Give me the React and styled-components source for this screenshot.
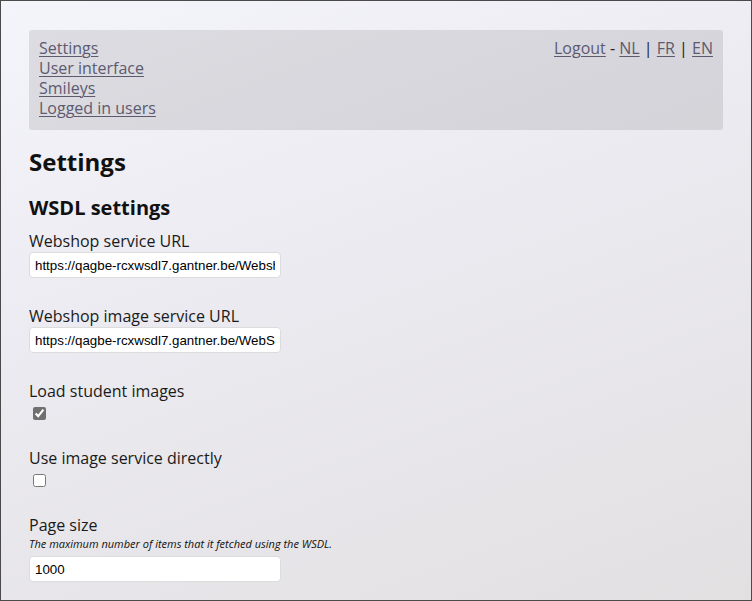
import React from "react";
import styled, { createGlobalStyle } from "styled-components";

const Global = createGlobalStyle`
  html, body { margin: 0; padding: 0; }
  body { font-family: "Open Sans", "Noto Sans", sans-serif; color: #111; }
  * { box-sizing: border-box; }
`;

const Page = styled.div`
  width: 752px;
  height: 601px;
  border: 1px solid #4a4a4a;
  background: linear-gradient(160deg, #f4f4fb 0%, #ebeaf0 45%, #e2e0e1 100%);
  padding: 29px 28px 0 28px;
  overflow: hidden;
`;

const Nav = styled.nav`
  display: flex;
  justify-content: space-between;
  align-items: flex-start;
  background: rgba(0, 0, 0, 0.095);
  border-radius: 3px;
  padding: 8px 10px 12px 10px;
  font-size: 16px;
  line-height: 20px;
`;

const NavList = styled.div`
  display: flex;
  flex-direction: column;
`;

const NavLink = styled.a`
  color: #5d5a70;
  text-decoration: underline;
  text-underline-offset: 2px;
  text-decoration-thickness: 1px;
  cursor: pointer;
`;

const Lang = styled.div`
  color: #222;
  white-space: pre;
`;

const Title = styled.h1`
  font-size: 24px;
  font-weight: 700;
  margin: 15px 0 0 0;
  line-height: 33px;
`;

const Subtitle = styled.h2`
  font-size: 20px;
  font-weight: 700;
  margin: 16px 0 9px 0;
  line-height: 27px;
`;

const Field = styled.div`
  display: flex;
  flex-direction: column;
  align-items: flex-start;
  margin-bottom: ${(p) => p.gap ?? 24}px;
`;

const Label = styled.label`
  font-size: 16px;
  line-height: 22px;
  color: #1a1a1a;
`;

const Help = styled.small`
  font-size: 11px;
  font-style: italic;
  line-height: 15px;
  color: #111;
  margin-bottom: 5px;
`;

const TextInput = styled.input`
  width: 252px;
  height: 26px;
  border: 1px solid #dcdcdc;
  border-radius: 4px;
  background: #fff;
  padding: 0 5px;
  font-family: "Liberation Sans", Arial, sans-serif;
  font-size: 13.33px;
  color: #000;
  outline: none;
`;

const Check = styled.input`
  margin: 5px 0 3px 4px;
  width: 13px;
  height: 13px;
  accent-color: #707070;
`;

export default function App() {
  return (
    <>
      <Global />
      <Page>
        <Nav>
          <NavList>
            <NavLink>Settings</NavLink>
            <NavLink>User interface</NavLink>
            <NavLink>Smileys</NavLink>
            <NavLink>Logged in users</NavLink>
          </NavList>
          <Lang>
            <NavLink>Logout</NavLink> - <NavLink>NL</NavLink> | <NavLink>FR</NavLink> | <NavLink>EN</NavLink>
          </Lang>
        </Nav>
        <Title>Settings</Title>
        <Subtitle>WSDL settings</Subtitle>
        <Field gap={27}>
          <Label>Webshop service URL</Label>
          <TextInput defaultValue="https://qagbe-rcxwsdl7.gantner.be/WebshopService" />
        </Field>
        <Field gap={27}>
          <Label>Webshop image service URL</Label>
          <TextInput defaultValue="https://qagbe-rcxwsdl7.gantner.be/WebShopImageService" />
        </Field>
        <Field>
          <Label>Load student images</Label>
          <Check type="checkbox" defaultChecked />
        </Field>
        <Field>
          <Label>Use image service directly</Label>
          <Check type="checkbox" />
        </Field>
        <Field>
          <Label>Page size</Label>
          <Help>The maximum number of items that it fetched using the WSDL.</Help>
          <TextInput defaultValue="1000" />
        </Field>
      </Page>
    </>
  );
}
